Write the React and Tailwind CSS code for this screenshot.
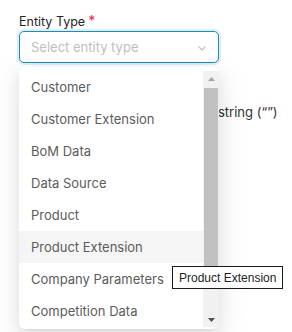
import React from "react";

const items = [
  "Customer",
  "Customer Extension",
  "BoM Data",
  "Data Source",
  "Product",
  "Product Extension",
  "Company Parameters",
  "Competition Data",
];

export default function App() {
  return (
    <div className="relative w-[292px] h-[332px] bg-white overflow-hidden font-['Inter',sans-serif]">
      <div className="pl-[19px] pt-[12px]">
        <div className="flex items-start h-[19px] text-[12.5px] leading-[19px] text-[#262626]">
          <span>Entity Type</span>
          <span className="ml-[3px] text-[#e0245e] text-[14px] leading-[17px]">*</span>
        </div>
        <div className="w-[200px] h-[32px] rounded-[5px] border border-[#1b8cb8] shadow-[0_0_0_2px_rgba(27,140,184,0.15)] flex items-center pl-[11px] pr-[11px] pt-[1px]">
          <span className="flex-1 text-[13px] text-[#bfbfbf]">Select entity type</span>
          <svg width="10" height="10" viewBox="0 0 10 10" className="text-[#bfbfbf]">
            <path d="M1.5 3.5 L5 7 L8.5 3.5" fill="none" stroke="currentColor" strokeWidth="1.2" />
          </svg>
        </div>
        <div className="mt-[39px] pl-[199px] text-[13px] leading-[20px] text-[#333]">
          string (“”)
        </div>
      </div>

      <div className="absolute left-[19px] top-[67px] w-[200px] bg-white rounded-[6px] pt-[4px] pb-[2px] shadow-[0_6px_16px_0_rgba(0,0,0,0.08),0_3px_6px_-4px_rgba(0,0,0,0.12),0_9px_28px_8px_rgba(0,0,0,0.05)] flex">
        <div className="w-[184px] flex flex-col">
          {items.map((it) => (
            <div
              key={it}
              className={`h-[32px] flex items-center pl-[12px] pt-[1px] text-[13px] text-[#5c5c5c] ${
                it === "Product Extension" ? "bg-[#f5f5f5]" : ""
              }`}
            >
              {it}
            </div>
          ))}
        </div>
        <div className="w-[16px] bg-[#f1f1f1] flex flex-col">
          <div className="h-[15px] flex items-center justify-center">
            <svg width="7" height="4" viewBox="0 0 7 4">
              <path d="M0 4 L3.5 0 L7 4 Z" fill="#a3a3a3" />
            </svg>
          </div>
          <div className="flex-1 px-[1px] pt-[2px]">
            <div className="h-[180px] bg-[#c1c1c1]" />
          </div>
          <div className="h-[15px] flex items-center justify-center">
            <svg width="7" height="4" viewBox="0 0 7 4">
              <path d="M0 0 L7 0 L3.5 4 Z" fill="#505050" />
            </svg>
          </div>
        </div>
      </div>

      <div className="absolute left-[172px] top-[266px] h-[23px] px-[6px] flex items-center bg-white border border-[#1a1a1a] text-[12px] text-[#222] font-['Liberation_Sans',sans-serif]">
        Product Extension
      </div>
    </div>
  );
}
